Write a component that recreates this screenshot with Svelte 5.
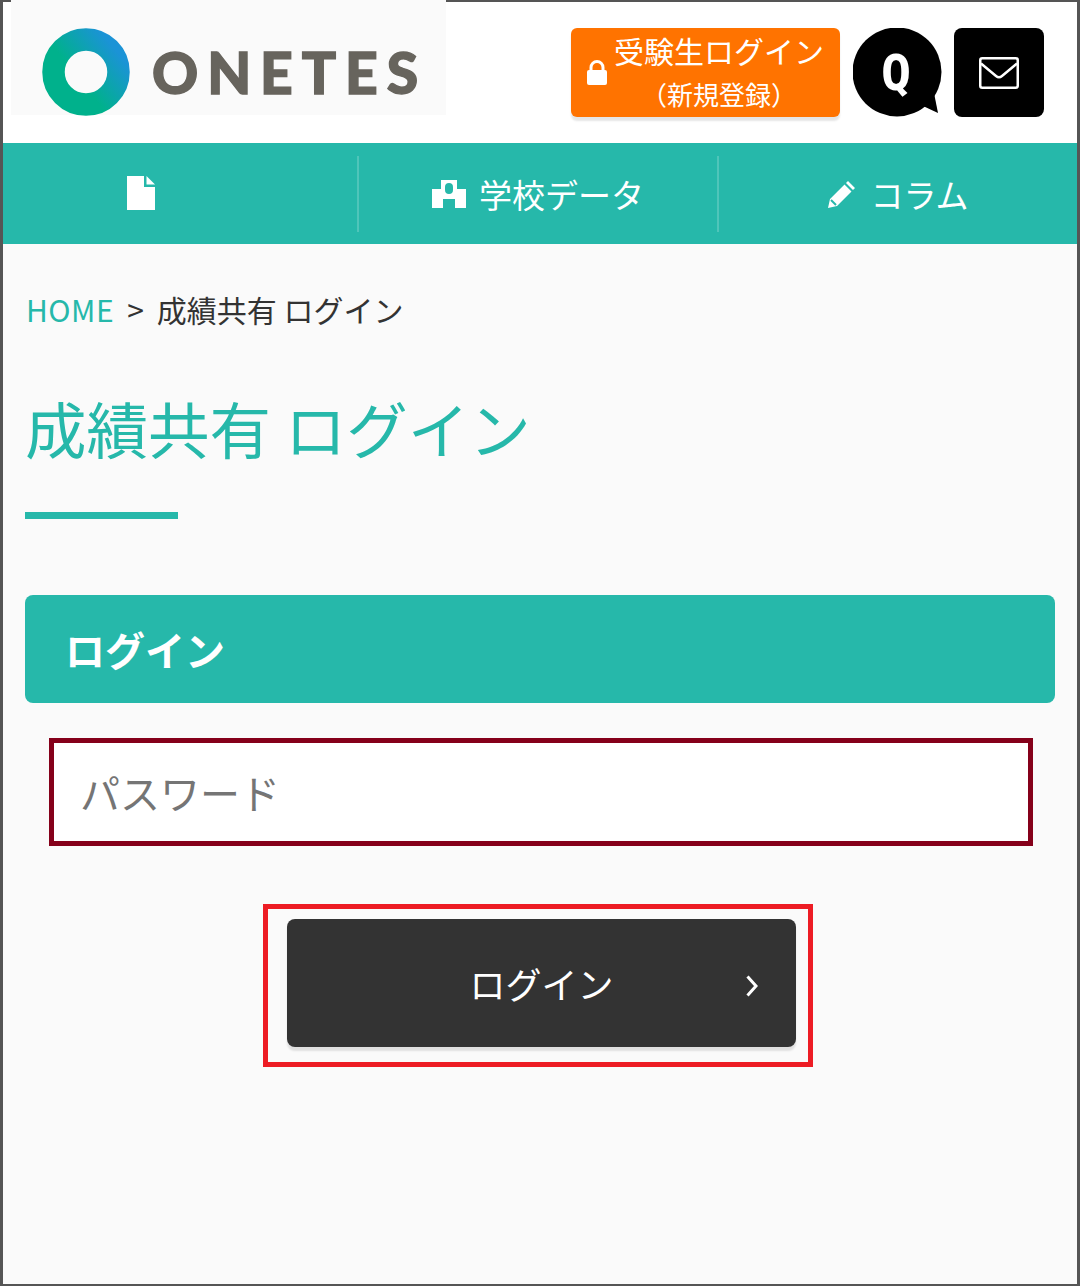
<script>
  const navItems = [
    { label: '', icon: 'doc' },
    { label: '学校データ', icon: 'school' },
    { label: 'コラム', icon: 'pencil' }
  ];
</script>

<div class="page">
  <header class="header">
    <div class="logo">
      <svg class="ring" viewBox="0 0 88 88" width="88" height="88" aria-hidden="true">
        <defs>
          <linearGradient id="ringGrad" x1="0.2" y1="0.75" x2="0.95" y2="0.15">
            <stop offset="0.25" stop-color="#00b18c" />
            <stop offset="1" stop-color="#1b93d6" />
          </linearGradient>
        </defs>
        <circle cx="44" cy="44" r="32.5" fill="none" stroke="url(#ringGrad)" stroke-width="22.5" />
      </svg>
      <span class="logo-text">ONETES</span>
    </div>
    <div class="actions">
      <a class="signup">
        <svg class="lock" viewBox="0 0 20 26" width="20" height="26" aria-hidden="true">
          <path d="M4 11V7.500a6 6 0 0 1 12 0V11" fill="none" stroke="#fff" stroke-width="3" />
          <rect x="0" y="10" width="20" height="15" rx="2" fill="#fff" />
        </svg>
        <span class="signup-text">
          <span class="signup-main">受験生ログイン</span>
          <span class="signup-sub">（新規登録）</span>
        </span>
      </a>
      <a class="bubble">
        <svg viewBox="0 0 89 89" width="89" height="89" aria-hidden="true">
          <circle cx="44" cy="44" r="44.500" fill="#000" />
          <path d="M70 78L85 85L81 65Z" fill="#000" />
        </svg>
        <span class="q">Q</span>
      </a>
      <a class="mail">
        <svg viewBox="0 0 40 32" width="40" height="32" aria-hidden="true">
          <rect x="1.250" y="1.250" width="37.500" height="29.500" rx="2" fill="none" stroke="#fff" stroke-width="2.500" />
          <path d="M2 6.500L17 19Q20 21.500 23 19L38 6.500" fill="none" stroke="#fff" stroke-width="2.500" />
        </svg>
      </a>
    </div>
  </header>

  <nav class="nav">
    {#each navItems as item}
      <a class="nav-item">
        {#if item.icon === 'doc'}
          <svg class="doc" viewBox="0 0 28 34" width="28" height="34" aria-hidden="true">
            <path d="M0 0H17V11H28V34H0Z" fill="#fff" />
            <path d="M19.500 0L28 8.500H19.500Z" fill="#fff" />
          </svg>
        {:else if item.icon === 'school'}
          <svg viewBox="0 0 34 28" width="34" height="28" aria-hidden="true">
            <path fill-rule="evenodd" d="M9 0H25V9H34V28H23V19H11V28H0V9H9ZM17 3A4 4 0 0 0 13 7V10A4 4 0 0 0 21 10V7A4 4 0 0 0 17 3Z" fill="#fff" />
          </svg>
        {:else}
          <svg viewBox="0 0 30 30" width="30" height="30" aria-hidden="true">
            <path d="M21 2L28 9L26 11L19 4ZM17.500 5.500L24.500 12.500L10 27L1 29L3 20Z" fill="#fff" />
            <path d="M4 21L9 26" stroke="#26b8aa" stroke-width="2" />
          </svg>
        {/if}
        {#if item.label}<span>{item.label}</span>{/if}
      </a>
    {/each}
  </nav>

  <main class="main">
    <p class="crumbs"><a class="home">HOME</a><span class="gt">&gt;</span><span>成績共有 ログイン</span></p>
    <h1 class="title">成績共有 ログイン</h1>
    <div class="rule"></div>

    <h2 class="section">ログイン</h2>

    <div class="field">
      <input class="input" type="password" placeholder="パスワード" />
    </div>

    <div class="submit-wrap">
      <div class="outline">
        <button class="submit" type="button">
          <span>ログイン</span>
          <svg class="chev" viewBox="0 0 12 22" width="12" height="22" aria-hidden="true">
            <path d="M1.500 1.500L10 11L1.500 20.500" fill="none" stroke="#fff" stroke-width="3" />
          </svg>
        </button>
      </div>
    </div>
  </main>
</div>

<style>
  :global(body) {
    margin: 0;
    background: #fafafa;
  }
  .page {
    box-sizing: border-box;
    width: 1080px;
    height: 1286px;
    border-style: solid;
    border-color: #555;
    border-width: 2px 3px;
    background: #fafafa;
    font-family: "Noto Sans CJK JP", "Noto Sans", sans-serif;
    color: #333;
  }
  .header {
    height: 141px;
    background: #fff;
    display: flex;
    justify-content: space-between;
    align-items: flex-start;
    padding-right: 33px;
  }
  .logo {
    width: 404px;
    height: 113px;
    margin: -2px 0 0 8px;
    padding: 2px 0 0 31px;
    background: #fafafa;
    display: flex;
    align-items: center;
    gap: 22px;
  }
  .ring {
    flex: none;
    margin-top: 27px;
  }
  .logo-text {
    font-family: Lato, sans-serif;
    font-weight: 900;
    font-size: 57px;
    letter-spacing: 8.900px;
    -webkit-text-stroke: 1.400px #67645d;
    color: #67645d;
    line-height: 1;
    margin-top: 28px;
  }
  .actions {
    display: flex;
    align-items: flex-start;
    margin-top: 26px;
  }
  .signup {
    box-sizing: border-box;
    width: 269px;
    height: 89px;
    background: #ff7300;
    border-radius: 6px;
    box-shadow: 0 4px 2px rgba(0, 0, 0, 0.1);
    color: #fff;
    display: flex;
    align-items: center;
    padding-left: 16px;
    gap: 7px;
  }
  .lock {
    flex: none;
    margin-top: 1px;
  }
  .signup-text {
    display: flex;
    flex-direction: column;
    align-items: center;
    margin-top: -2px;
  }
  .signup-main {
    font-size: 30px;
    line-height: 44px;
    white-space: nowrap;
  }
  .signup-sub {
    font-size: 26px;
    line-height: 44px;
    white-space: nowrap;
  }
  .bubble {
    position: relative;
    margin-left: 13px;
    width: 89px;
    height: 89px;
    display: flex;
  }
  .q {
    position: absolute;
    inset: 0;
    display: flex;
    align-items: center;
    justify-content: center;
    font-family: "DejaVu Sans Mono", monospace;
    font-weight: 700;
    font-size: 50px;
    color: #fff;
    line-height: 1;
    margin-left: -3px;
  }
  .mail {
    margin-left: 12px;
    width: 90px;
    height: 89px;
    background: #000;
    border-radius: 8px;
    display: flex;
    align-items: center;
    justify-content: center;
  }
  .nav {
    height: 101px;
    background: #26b8aa;
    display: grid;
    grid-template-columns: 354px 360px 1fr;
    align-items: center;
  }
  .nav-item {
    height: 76px;
    display: flex;
    align-items: center;
    justify-content: center;
    gap: 13px;
    color: #fff;
    font-size: 33px;
    border-left: 2px solid #4fc5ba;
  }
  .nav-item:first-child {
    border-left: 0;
    padding-right: 78px;
  }
  .doc {
    margin-top: -2px;
  }
  .main {
    padding: 0 22px;
  }
  .crumbs {
    margin: 45px 0 0;
    font-size: 30px;
    line-height: 40px;
    color: #333;
    white-space: nowrap;
  }
  .home {
    color: #26b8aa;
    margin-left: 1px;
    letter-spacing: 0.500px;
  }
  .gt {
    margin: 0 13px;
  }
  .title {
    margin: 59px 0 0;
    font-size: 61.500px;
    font-weight: 400;
    line-height: 80px;
    color: #26b8aa;
    white-space: nowrap;
  }
  .rule {
    width: 153px;
    height: 7px;
    background: #26b8aa;
    margin-top: 44px;
  }
  .section {
    margin: 76px 0 0;
    height: 108px;
    background: #26b8aa;
    border-radius: 8px;
    color: #fff;
    font-size: 40px;
    font-weight: 700;
    line-height: 108px;
    padding-left: 40px;
  }
  .field {
    margin: 35px 0 0 24px;
    width: 984px;
  }
  .input {
    display: block;
    box-sizing: border-box;
    width: 100%;
    height: 108px;
    border: 5px solid #85001a;
    background: #fff;
    padding: 0 26px;
    font-family: inherit;
    font-size: 40px;
    outline: none;
    border-radius: 0;
  }
  .input::placeholder {
    color: #757575;
    opacity: 1;
  }
  .submit-wrap {
    display: flex;
    margin-top: 58px;
    padding-left: 238px;
  }
  .outline {
    box-sizing: border-box;
    width: 550px;
    height: 163px;
    border: 5px solid #ed1c24;
    padding: 10px 0 0 19px;
  }
  .submit {
    position: relative;
    display: flex;
    align-items: center;
    justify-content: center;
    width: 509px;
    height: 128px;
    border: 0;
    border-radius: 8px;
    background: #333;
    color: #fff;
    font-family: inherit;
    font-size: 36px;
    box-shadow: 0 4px 2px rgba(0, 0, 0, 0.1);
    padding: 0;
  }
  .chev {
    position: absolute;
    right: 38px;
    top: 56px;
  }
</style>
